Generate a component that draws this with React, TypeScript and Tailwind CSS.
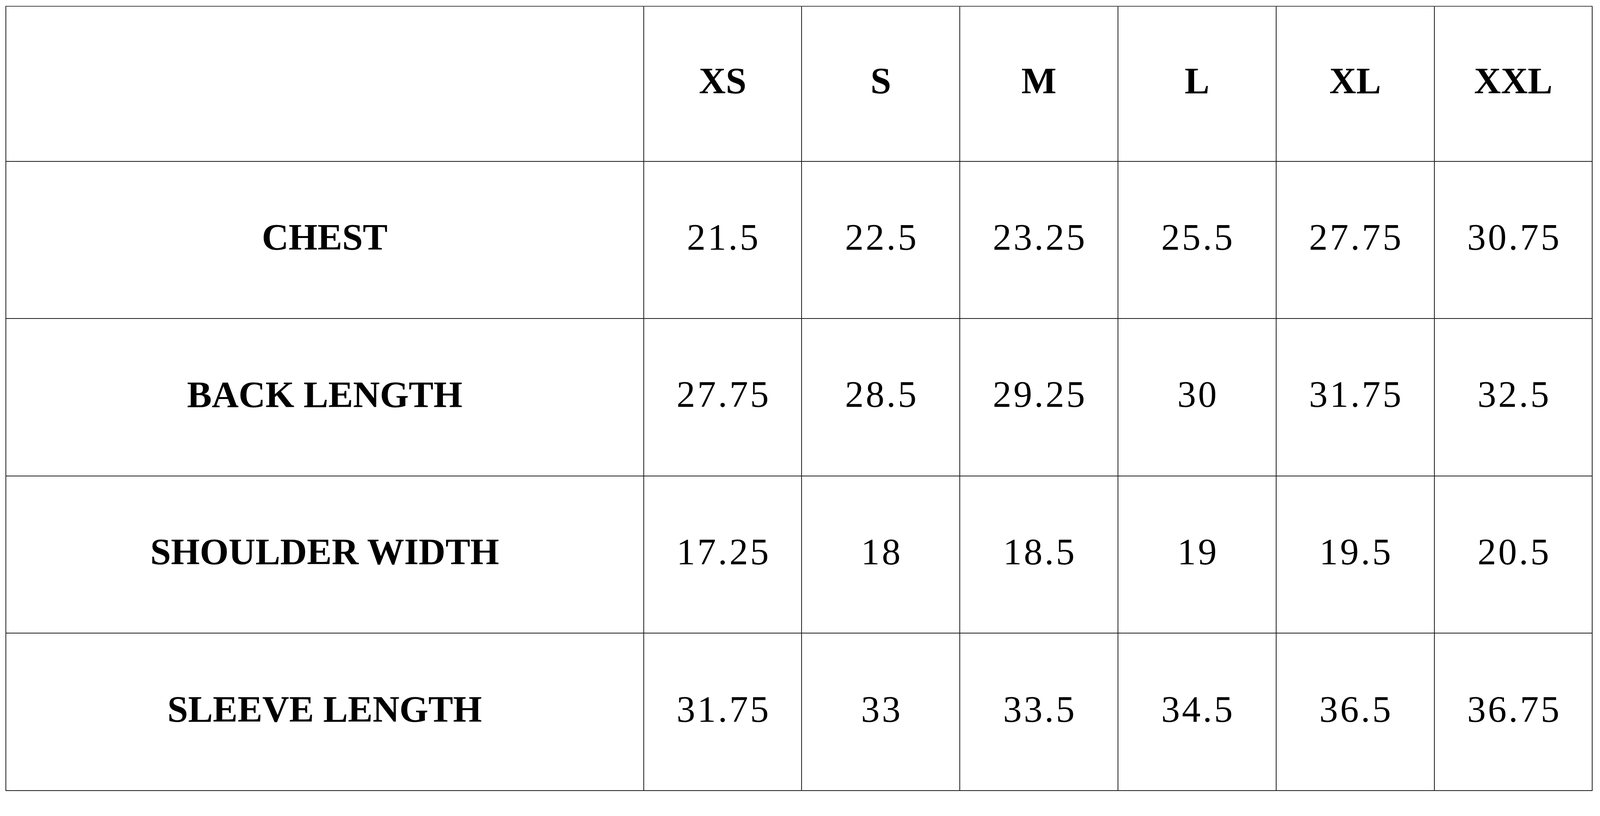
import React from "react";

const sizes = ["XS", "S", "M", "L", "XL", "XXL"];
const rows: { label: string; values: string[] }[] = [
  { label: "CHEST", values: ["21.5", "22.5", "23.25", "25.5", "27.75", "30.75"] },
  { label: "BACK LENGTH", values: ["27.75", "28.5", "29.25", "30", "31.75", "32.5"] },
  { label: "SHOULDER WIDTH", values: ["17.25", "18", "18.5", "19", "19.5", "20.5"] },
  { label: "SLEEVE LENGTH", values: ["31.75", "33", "33.5", "34.5", "36.5", "36.75"] },
];

const cell =
  "flex items-center justify-center border-r-2 border-b-2 border-[#1a1a1a] pb-[13px] text-black leading-none";
const head = "font-bold text-[95px]";
const num = "text-[95.5px] tracking-[5.3px] pl-[5px]";

export default function App() {
  return (
    <div
      className="w-full min-h-screen bg-white pl-[13.7px] pt-[14.7px]"
      style={{ fontFamily: '"Liberation Serif", "Times New Roman", serif' }}
    >
      <div className="grid w-fit grid-cols-[1633px_repeat(6,404.8px)] grid-rows-[397px_repeat(4,402.6px)] border-t-2 border-l-2 border-t-[#444444] border-l-[#1a1a1a]">
        <div className={cell}></div>
        {sizes.map((s) => (
          <div key={s} className={`${cell} ${head}`}>
            {s}
          </div>
        ))}
        {rows.map((r) => (
          <React.Fragment key={r.label}>
            <div className={`${cell} ${head}`}>{r.label}</div>
            {r.values.map((v, i) => (
              <div key={i} className={`${cell} ${num}`}>
                {v}
              </div>
            ))}
          </React.Fragment>
        ))}
      </div>
    </div>
  );
}
